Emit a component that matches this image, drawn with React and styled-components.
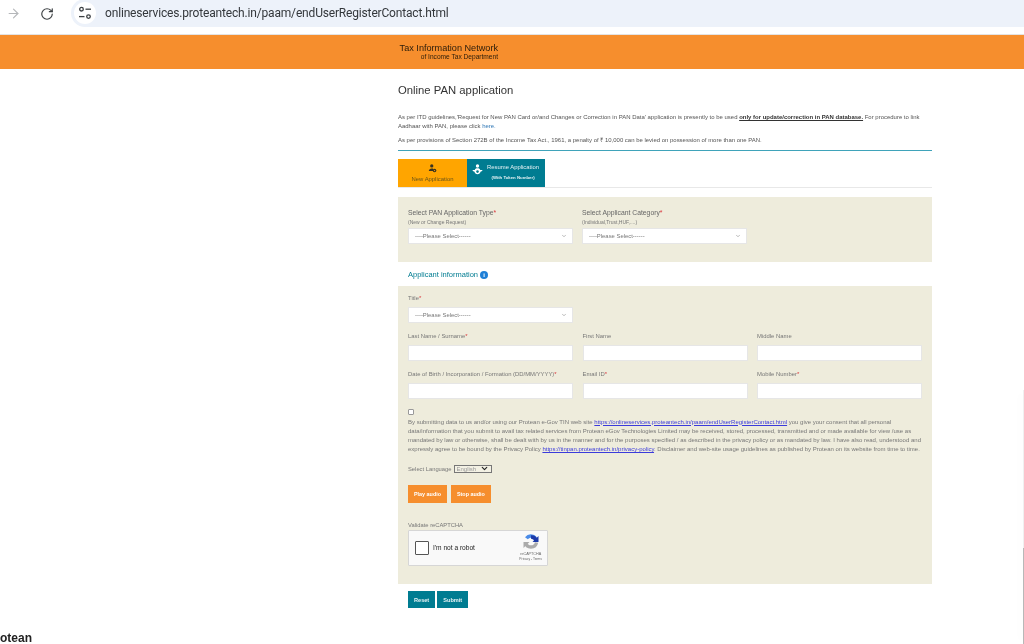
import React from 'react'
import styled, {createGlobalStyle} from 'styled-components'
import {ArrowRight, RotateCw, ChevronDown} from 'lucide-react'

const GlobalStyle = createGlobalStyle`
  html, body {
    margin: 0;
    padding: 0;
    background: #fff;
    overflow: hidden;
    font-family: "Liberation Sans", Arial, sans-serif;
  }
  * { box-sizing: border-box; }
`

const TuneIcon = () => (
  <svg width="14" height="14" viewBox="0 0 14 14" fill="none" stroke="#3c4043" strokeWidth="1.3">
    <circle cx="3.5" cy="3.2" r="1.8" />
    <path d="M7.5 3.2h5.5" />
    <path d="M1 10.6h5.5" />
    <circle cx="10.5" cy="10.6" r="1.8" />
  </svg>
)

const PersonGear = ({color}) => (
  <svg width="9" height="9" viewBox="0 0 11 11" fill={color}>
    <circle cx="4.6" cy="2.4" r="2" />
    <path d="M1 8.6c0-2 1.6-3.2 3.6-3.2.7 0 1.3.1 1.8.4v2.8z" />
    <circle cx="8" cy="8" r="2.2" />
    <circle cx="8" cy="8" r=".8" fill="#ffa500" />
  </svg>
)

const PersonTurn = () => (
  <svg width="11" height="11" viewBox="0 0 13 13" fill="#fff">
    <circle cx="6.5" cy="2.4" r="2" />
    <path d="M6.5 5c-2 0-3 .8-3.2 2H1.2c-.6 0-.8 1-.2 1.3l2 .9c.2 1.6 1.6 2.8 3.5 2.8s3.3-1.2 3.5-2.8l2-.9c.6-.3.4-1.3-.2-1.3H9.7C9.5 5.800 8.500 5 6.500 5z" />
    <circle cx="6.500" cy="9" r="1.500" fill="#007c91" />
  </svg>
)

const RecaptchaLogo = () => (
  <svg width="16" height="16" viewBox="0 0 16 16" fill="none" strokeWidth="3.4">
    <path d="M3.4 4.300A5.600 5.600 0 0 1 13.300 6" stroke="#4a8be8" />
    <path d="M8 3A5 5 0 0 1 13 7" stroke="#1c3aa9" />
    <path d="M13.500 8.500A5.600 5.600 0 0 1 2.500 8.500" stroke="#ababab" />
    <path d="M15.500 2v6h-6z" fill="#1c3aa9" stroke="none" />
    <path d="M.5 14V8h6z" fill="#ababab" stroke="none" />
  </svg>
)

const Field = ({label, required, children}) => (
  <FieldBox>
    <FieldLabel>{label}{required && <Req>*</Req>}</FieldLabel>
    {children}
  </FieldBox>
)

const Dropdown = () => (
  <SelectBox>
    ----Please Select------
    <ChevronDown size={6} strokeWidth={2} color="#777" />
  </SelectBox>
)

export default function App() {
  return (
    <>
      <GlobalStyle />
      <Page>
        <BrowserBar>
          <ArrowRight size={15} color="#b5b7ba" strokeWidth={1.8} />
          <Reload><RotateCw size={14} color="#3c4043" strokeWidth={2} /></Reload>
          <Omnibox>
            <SiteChip><TuneIcon /></SiteChip>
            <Url>onlineservices.proteantech.in/paam/endUserRegisterContact.html</Url>
          </Omnibox>
        </BrowserBar>

        <Banner>
          <BannerText>
            <strong>Tax Information Network</strong>
            <span>of Income Tax Department</span>
          </BannerText>
        </Banner>

        <Main>
          <Heading>Online PAN application</Heading>
          <Note>
            As per ITD guidelines,'Request for New PAN Card or/and Changes or Correction in PAN Data' application is presently to be used <Strong>only for update/correction in PAN database.</Strong> For procedure to link Aadhaar with PAN, please click <Here>here.</Here>
          </Note>
          <Note $second>
            As per provisions of Section 272B of the Income Tax Act., 1961, a penalty of ₹ 10,000 can be levied on possession of more than one PAN.
          </Note>
          <Rule />

          <Tabs>
            <NewTab>
              <PersonGear color="#3a3320" />
              <span>New Application</span>
            </NewTab>
            <ResumeTab>
              <PersonTurn />
              <ResumeText>
                <span>Resume Application</span>
                <small>(With Token Number)</small>
              </ResumeText>
            </ResumeTab>
          </Tabs>

          <TypePanel>
            <TypeCol>
              <TypeLabel>Select PAN Application Type<Req>*</Req></TypeLabel>
              <Hint>(New or Change Request)</Hint>
              <Dropdown />
            </TypeCol>
            <TypeCol>
              <TypeLabel>Select Applicant Category<Req>*</Req></TypeLabel>
              <Hint>(Individual,Trust,HUF,....)</Hint>
              <Dropdown />
            </TypeCol>
          </TypePanel>

          <SectionTitle>
            Applicant information
            <InfoDot>i</InfoDot>
          </SectionTitle>

          <InfoPanel>
            <FormGrid>
              <Field label="Title" required><Dropdown /></Field>
              <span />
              <span />
              <Field label="Last Name / Surname" required><TextInput /></Field>
              <Field label="First Name"><TextInput /></Field>
              <Field label="Middle Name"><TextInput /></Field>
              <Field label="Date of Birth / Incorporation / Formation (DD/MM/YYYY)" required><TextInput /></Field>
              <Field label="Email ID" required><TextInput /></Field>
              <Field label="Mobile Number" required><TextInput /></Field>
            </FormGrid>

            <Consent />
            <ConsentText>
              By submitting data to us and/or using our Protean e-Gov TIN web site <Link>https://onlineservices.proteantech.in/paam/endUserRegisterContact.html</Link> you give your consent that all personal data/information that you submit to avail tax related services from Protean eGov Technologies Limited may be received, stored, processed, transmitted and or made available for view /use as mandated by law or otherwise, shall be dealt with by us in the manner and for the purposes specified / as described in the privacy policy or as mandated by law. I have also read, understood and expressly agree to be bound by the Privacy Policy <Link>https://tinpan.proteantech.in/privacy-policy</Link>. Disclaimer and web-site usage guidelines as published by Protean on its website from time to time.
            </ConsentText>

            <LanguageRow>
              Select Language
              <LanguageBox>English <ChevronDown size={9} strokeWidth={3} color="#222" /></LanguageBox>
            </LanguageRow>

            <AudioRow>
              <AudioButton>Play audio</AudioButton>
              <AudioButton>Stop audio</AudioButton>
            </AudioRow>

            <CaptchaLabel>Validate reCAPTCHA</CaptchaLabel>
            <Captcha>
              <CaptchaTick />
              <CaptchaText>I'm not a robot</CaptchaText>
              <CaptchaBrand>
                <RecaptchaLogo />
                <b>reCAPTCHA</b>
                <span>Privacy - Terms</span>
              </CaptchaBrand>
            </Captcha>
          </InfoPanel>

          <Actions>
            <TealButton>Reset</TealButton>
            <TealButton>Submit</TealButton>
          </Actions>
        </Main>

        <FooterCut>otean</FooterCut>
        <EdgeShadow />
      </Page>
    </>
  )
}

const Page = styled.div`
  position: relative;
  width: 1024px;
  height: 644px;
  overflow: hidden;
  background: #fff;
  filter: blur(0.5px);
`
const BrowserBar = styled.div`
  display: flex;
  align-items: center;
  height: 35px;
  padding: 0 0 7px 6px;
  border-bottom: 1px solid #e3e3e3;
`
const Reload = styled.div`
  display: flex;
  margin-left: 19px;
`
const Omnibox = styled.div`
  display: flex;
  align-items: center;
  flex: 1;
  height: 28px;
  margin: -1px 0 0 17px;
  padding-left: 3px;
  background: #edf2fa;
  border-radius: 14px 0 0 14px;
`
const SiteChip = styled.div`
  display: flex;
  align-items: center;
  justify-content: center;
  width: 22px;
  height: 22px;
  background: #fff;
  border-radius: 50%;
`
const Url = styled.div`
  margin-left: 9px;
  font: 12px "Roboto", sans-serif;
  letter-spacing: -0.17px;
  color: #33373b;
  white-space: nowrap;
`
const Banner = styled.div`
  display: flex;
  height: 34px;
  padding: 8px 0 0 398px;
  background: #f68e2d;
`
const BannerText = styled.div`
  display: flex;
  flex-direction: column;
  align-items: flex-end;
  width: 100px;
  color: #2a1c0a;
  strong { font-size: 9.15px; font-weight: 400; line-height: 10px; white-space: nowrap; }
  span { font-size: 6.6px; line-height: 8px; white-space: nowrap; }
`
const Main = styled.main`
  width: 534px;
  margin-left: 398px;
  padding-top: 14px;
`
const Heading = styled.h1`
  margin: 0 0 16px;
  font-size: 11.3px;
  font-weight: 400;
  line-height: 14px;
  color: #333;
`
const Note = styled.p`
  margin: 0 0 ${({$second}) => $second ? "5px" : "5px"};
  width: 530px;
  font-size: 5.97px;
  line-height: 9px;
  color: #555;
`
const Strong = styled.span`
  font-weight: 700;
  text-decoration: underline;
  color: #333;
`
const Here = styled.a`
  color: #337ab7;
`
const Rule = styled.div`
  height: 1px;
  background: #3fa3ba;
`
const Tabs = styled.div`
  display: flex;
  height: 29px;
  margin-top: 8px;
  border-bottom: 1px solid #e8e8e8;
`
const NewTab = styled.div`
  display: flex;
  flex-direction: column;
  align-items: center;
  gap: 3px;
  width: 69px;
  height: 28px;
  padding-top: 5px;
  background: #ffa500;
  font-size: 5.9px;
  line-height: 7px;
  color: #6b5518;
`
const ResumeTab = styled.div`
  display: flex;
  align-items: flex-start;
  gap: 4px;
  width: 78px;
  height: 28px;
  padding: 5px 0 0 5px;
  background: #007c91;
  color: #e4f2f4;
`
const ResumeText = styled.div`
  display: flex;
  flex-direction: column;
  align-items: center;
  gap: 3px;
  font-size: 5.9px;
  line-height: 7px;
  white-space: nowrap;
  small { font-size: 4.3px; font-weight: 700; }
`
const TypePanel = styled.section`
  display: flex;
  gap: 9px;
  height: 65px;
  margin-top: 9px;
  padding: 11px 9px 0 10px;
  background: #eeecdc;
`
const TypeCol = styled.div`
  display: flex;
  flex-direction: column;
  width: 165px;
`
const TypeLabel = styled.label`
  font-size: 6.8px;
  line-height: 9px;
  color: #666;
`
const Hint = styled.span`
  margin: 1px 0 2px;
  font-size: 5px;
  line-height: 8px;
  color: #777;
`
const Req = styled.span`
  color: #d9343a;
`
const SelectBox = styled.div`
  display: flex;
  align-items: center;
  justify-content: space-between;
  height: 15.5px;
  padding: 0 5px 0 6px;
  background: #fff;
  border: 1px solid #e6e6e6;
  font-size: 5.9px;
  color: #777;
`
const SectionTitle = styled.h2`
  display: flex;
  align-items: center;
  gap: 2px;
  height: 24px;
  margin: 0;
  padding: 1px 0 0 10px;
  font-size: 7.5px;
  font-weight: 400;
  color: #007c91;
`
const InfoDot = styled.span`
  display: flex;
  align-items: center;
  justify-content: center;
  width: 8px;
  height: 8px;
  border-radius: 50%;
  background: #1e7fd6;
  color: #fff;
  font-size: 6px;
  font-weight: 700;
`
const InfoPanel = styled.section`
  height: 298px;
  padding: 8px 10px 0;
  background: #eeecdc;
`
const FormGrid = styled.div`
  display: grid;
  grid-template-columns: repeat(3, 165px);
  column-gap: 9.5px;
  row-gap: 9px;
`
const FieldBox = styled.div`
  display: flex;
  flex-direction: column;
  gap: 5px;
`
const FieldLabel = styled.label`
  font-size: 5.9px;
  line-height: 8px;
  color: #777;
  white-space: nowrap;
`
const TextInput = styled.div`
  height: 16px;
  background: #fff;
  border: 1px solid #e6e6e6;
`
const Consent = styled.div`
  width: 6px;
  height: 6px;
  margin-top: 10px;
  background: #fff;
  border: 1px solid #999;
  border-radius: 1px;
`
const ConsentText = styled.p`
  width: 514px;
  margin: 3px 0 0;
  font-size: 6px;
  line-height: 9.3px;
  color: #777;
`
const Link = styled.a`
  color: #3b3bdb;
  text-decoration: underline;
`
const LanguageRow = styled.div`
  display: flex;
  align-items: center;
  gap: 2px;
  margin-top: 10px;
  font-size: 5.8px;
  line-height: 8px;
  color: #777;
`
const LanguageBox = styled.div`
  display: flex;
  align-items: center;
  justify-content: space-between;
  width: 38px;
  height: 8px;
  padding: 0 2px;
  border: 1px solid #777;
  background: #f3f1e4;
  color: #999;
  font-size: 6px;
`
const AudioRow = styled.div`
  display: flex;
  gap: 4px;
  margin-top: 12px;
`
const AudioButton = styled.button`
  height: 18px;
  padding: 0 6px;
  border: 0;
  background: #f68e2d;
  color: #fff;
  font: 700 5.4px "Liberation Sans", sans-serif;
`
const CaptchaLabel = styled.div`
  margin-top: 18px;
  font-size: 5.8px;
  line-height: 8px;
  color: #777;
`
const Captcha = styled.div`
  display: flex;
  align-items: center;
  width: 140px;
  height: 36px;
  margin-top: 1px;
  padding: 0 5px 0 6px;
  background: #f9f9f9;
  border: 1px solid #d6d6d6;
  border-radius: 1px;
`
const CaptchaTick = styled.div`
  width: 14px;
  height: 14px;
  background: #fff;
  border: 1px solid #555;
  border-radius: 1px;
`
const CaptchaText = styled.span`
  margin-left: 4px;
  font-size: 6.6px;
  color: #222;
`
const CaptchaBrand = styled.div`
  display: flex;
  flex-direction: column;
  align-items: center;
  margin-left: auto;
  color: #666;
  b { font-size: 3.7px; font-weight: 400; margin-top: 1px; line-height: 6px; }
  span { font-size: 3.3px; line-height: 5px; }
`
const Actions = styled.div`
  display: flex;
  gap: 2px;
  margin-top: 7px;
  padding-left: 10px;
`
const TealButton = styled.button`
  height: 17px;
  padding: 0 6px;
  border: 0;
  background: #007c91;
  color: #e6f3f5;
  font: 700 5.6px "Liberation Sans", sans-serif;
`
const FooterCut = styled.div`
  position: absolute;
  left: 0;
  bottom: 0;
  font-size: 12px;
  font-weight: 700;
  line-height: 12px;
  color: #222;
`
const EdgeShadow = styled.div`
  position: absolute;
  right: 0;
  top: 390px;
  bottom: 0;
  width: 1px;
  background: #f0f0f0;
  box-shadow: -3px 0 8px rgba(0,0,0,.05);
  &::after {
    content: '';
    position: absolute;
    top: 158px;
    bottom: 0;
    left: 0;
    width: 1px;
    background: #b8b8b8;
  }
`
